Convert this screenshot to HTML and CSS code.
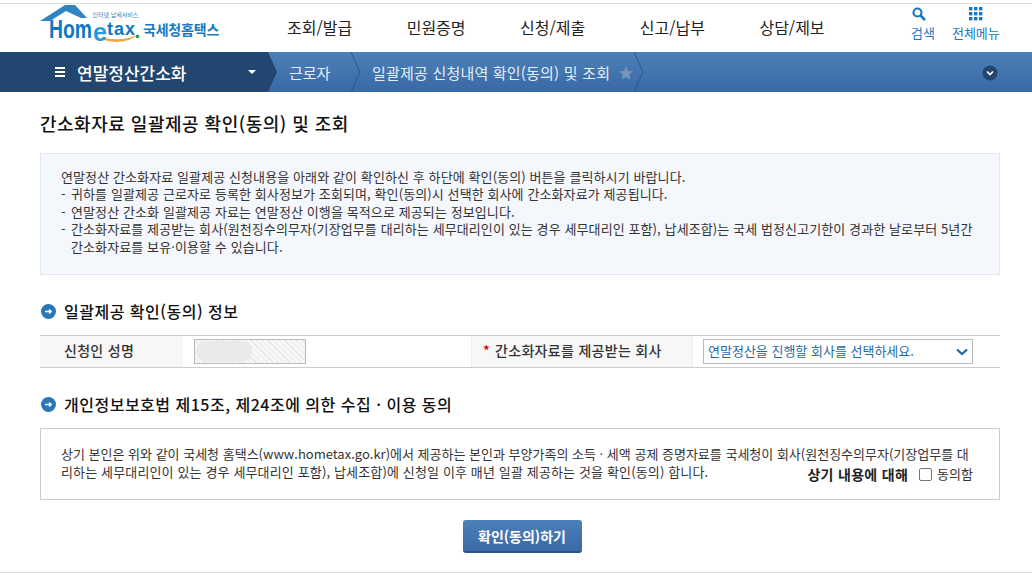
FILE: index.html
```html
<!DOCTYPE html>
<html lang="ko">
<head>
	<meta charset="utf-8"/>
	<title>연말정산간소화</title>
	<link rel="stylesheet" href="styles.css">
</head>
<body>
	<div class="header">
		<div class="logo">
			<svg width="180" height="46" viewBox="0 0 180 46">
				<path d="M0 21 L25 5 L35 5 L47 18 L41 18 L26 11 L10 21 Z" fill="#2f84c4"/>
				<path d="M64 40 Q84 46 99 34 Q84 42 64 38 Z" fill="#f0a93c"/>
				<circle cx="97.5" cy="36.5" r="1.8" fill="#1f9a47"/>
				<text x="9" y="38" textLength="43" lengthAdjust="spacingAndGlyphs" class="logo-home">Hom</text>
				<text x="53" y="41" class="logo-e">e</text>
				<text x="67" y="35" textLength="28" class="logo-tax">tax</text>
				<text x="52.5" y="17" class="logo-small">인터넷 납세서비스</text>
				<text x="103" y="35" class="logo-name">국세청홈택스</text>
			</svg>
		</div>
		<ul class="gnb">
			<li>조회/발급</li>
			<li>민원증명</li>
			<li>신청/제출</li>
			<li>신고/납부</li>
			<li>상담/제보</li>
		</ul>
		<div class="util">
			<div class="util-item">
				<svg class="search-icon" width="14" height="14" viewBox="0 0 14 14">
					<circle cx="5.5" cy="5.5" r="4" fill="none" stroke="#1a78bf" stroke-width="2.2"/>
					<path d="M8.5 8.5 L13 13" stroke="#1a78bf" stroke-width="2.6"/>
				</svg>
				<span>검색</span>
			</div>
			<div class="util-item">
				<svg width="14" height="14" viewBox="0 0 14 14" fill="#1a78bf">
					<rect x="0" y="0" width="3.4" height="3.4"/><rect x="5" y="0" width="3.4" height="3.4"/><rect x="10" y="0" width="3.4" height="3.4"/>
					<rect x="0" y="5" width="3.4" height="3.4"/><rect x="5" y="5" width="3.4" height="3.4"/><rect x="10" y="5" width="3.4" height="3.4"/>
					<rect x="0" y="10" width="3.4" height="3.4"/><rect x="5" y="10" width="3.4" height="3.4"/><rect x="10" y="10" width="3.4" height="3.4"/>
				</svg>
				<span>전체메뉴</span>
			</div>
		</div>
	</div>

	<div class="crumb">
		<div class="crumb-first">
			<span class="burger"></span>
			<span class="crumb-title">연말정산간소화</span>
			<span class="caret"></span>
		</div>
		<svg class="chev first" width="10" height="40" viewBox="0 0 10 40"><path d="M0 0 L9 20 L0 40 Z" fill="#22466f"/></svg>
		<div class="crumb-item one">근로자</div>
		<svg class="chev" width="10" height="40" viewBox="0 0 10 40"><path d="M0 0 L9 20 L0 40" fill="none" stroke="#245a8e"/></svg>
		<div class="crumb-item two">일괄제공 신청내역 확인(동의) 및 조회
			<svg class="star" width="14" height="14" viewBox="0 0 14 14"><path d="M7 0 L9 5 L14 5.3 L10.2 8.6 L11.4 13.6 L7 11 L2.6 13.6 L3.8 8.6 L0 5.3 L5 5 Z" fill="#7596bd"/></svg>
		</div>
		<svg class="chev" width="10" height="40" viewBox="0 0 10 40"><path d="M0 0 L9 20 L0 40" fill="none" stroke="#245a8e"/></svg>
		<svg class="more" width="16" height="16" viewBox="0 0 16 16">
			<circle cx="8" cy="8" r="7.5" fill="#22466f"/>
			<path d="M5 6.5 L8 9.5 L11 6.5" fill="none" stroke="#fff" stroke-width="1.6"/>
		</svg>
	</div>

	<div class="content">
		<h1 class="page-title">간소화자료 일괄제공 확인(동의) 및 조회</h1>

		<div class="notice">
			<p class="lead">연말정산 간소화자료 일괄제공 신청내용을 아래와 같이 확인하신 후 하단에 확인(동의) 버튼을 클릭하시기 바랍니다.</p>
			<p class="dash">귀하를 일괄제공 근로자로 등록한 회사정보가 조회되며, 확인(동의)시 선택한 회사에 간소화자료가 제공됩니다.</p>
			<p class="dash">연말정산 간소화 일괄제공 자료는 연말정산 이행을 목적으로 제공되는 정보입니다.</p>
			<p class="dash">간소화자료를 제공받는 회사(원천징수의무자(기장업무를 대리하는 세무대리인이 있는 경우 세무대리인 포함), 납세조합)는 국세 법정신고기한이 경과한 날로부터 5년간 간소화자료를 보유·이용할 수 있습니다.</p>
		</div>

		<h2 class="sub-title">
			<svg class="bullet" width="15" height="15" viewBox="0 0 15 15">
				<circle cx="7.5" cy="7.5" r="7.5" fill="#2a76b6"/>
				<path d="M4 7.5 L10 7.5 M8 5.5 L10.2 7.5 L8 9.5" fill="none" stroke="#fff" stroke-width="1.4"/>
			</svg>
			일괄제공 확인(동의) 정보
		</h2>
		<div class="info-row">
			<div class="th name-th">신청인 성명</div>
			<div class="td name-td"><div class="name-box"><span class="blur"></span></div></div>
			<div class="th company-th"><em>*</em>간소화자료를 제공받는 회사</div>
			<div class="td company-td">
				<div class="select">연말정산을 진행할 회사를 선택하세요.
					<svg width="12" height="8" viewBox="0 0 12 8"><path d="M1 1.5 L6 6 L11 1.5" fill="none" stroke="#1f6aa5" stroke-width="2.2"/></svg>
				</div>
			</div>
		</div>

		<h2 class="sub-title second">
			<svg class="bullet" width="15" height="15" viewBox="0 0 15 15">
				<circle cx="7.5" cy="7.5" r="7.5" fill="#2a76b6"/>
				<path d="M4 7.5 L10 7.5 M8 5.5 L10.2 7.5 L8 9.5" fill="none" stroke="#fff" stroke-width="1.4"/>
			</svg>
			개인정보보호법 제15조, 제24조에 의한 수집 · 이용 동의
		</h2>
		<div class="agree">
			<p>상기 본인은 위와 같이 국세청 홈택스(www.hometax.go.kr)에서 제공하는 본인과 부양가족의 소득 · 세액 공제 증명자료를 국세청이 회사(원천징수의무자(기장업무를 대<br><span class="line2">리하는 세무대리인이 있는 경우 세무대리인 포함), 납세조합)에 신청일 이후 매년 일괄 제공하는 것을 확인(동의) 합니다.</span></p>
			<div class="agree-check"><b>상기 내용에 대해</b><span class="checkbox"></span><span>동의함</span></div>
		</div>

		<div class="btn-wrap"><button class="btn">확인(동의)하기</button></div>
	</div>
	<div class="foot-line"></div>
</body>
</html>
```

FILE: styles.css
```css
*{margin: 0;padding: 0;box-sizing: border-box;}
ul{list-style-type: none;}
body{
	font-family: "Noto Sans CJK KR", "Liberation Sans", sans-serif;
	background: #fff;
	color: #222;
	font-size: 13px;
}
.header{
	height: 49px;
	border-top: 1px solid #ddd;
	margin-top: 3px;
	padding-left: 40px;
	display: flex;
	position: relative;
}
.logo{
	width: 180px;
	margin-top: -4px;
}
.logo svg{display: block;}
.logo-home{font: bold 26px "Liberation Sans", sans-serif;fill: #0f78c0;}
.logo-e{font: bold 25px "Liberation Sans", sans-serif;fill: #2f9ad6;}
.logo-tax{font: bold 18px "Liberation Sans", sans-serif;fill: #0f78c0;}
.logo-small{font-size: 6px;fill: #3b7fb8;}
.logo-name{font-size: 14px;font-weight: 700;fill: #1a78bf;letter-spacing: -.2px;}
.gnb{
	display: flex;
	gap: 54.5px;
	margin-left: 67px;
	padding-top: 13px;
}
.gnb li{
	font-size: 16px;
	line-height: 20px;
	color: #222;
	white-space: nowrap;
}
.util{
	position: absolute;
	top: 3px;
	left: 911px;
	display: flex;
	gap: 17px;
}
.util-item{
	display: flex;
	flex-direction: column;
	align-items: center;
	gap: 3px;
	font-size: 13px;
	line-height: 18px;
	color: #1a78bf;
}
.search-icon{margin-right: 8px;}
.crumb{
	height: 40px;
	background: linear-gradient(#4c80b9, #3a69a5);
	display: flex;
	align-items: center;
	position: relative;
	color: #e6eef7;
	font-size: 15px;
}
.crumb-first{
	width: 268px;
	height: 40px;
	padding-left: 40px;
	background: #22466f;
	display: flex;
	align-items: center;
	color: #fff;
}
.burger{
	width: 10px;
	height: 10px;
	margin-left: 15px;
	border-top: 2px solid #fff;
	border-bottom: 2px solid #fff;
	position: relative;
}
.burger:after{
	content: "";
	position: absolute;
	left: 0;
	right: 0;
	top: 2px;
	height: 2px;
	background: #fff;
}
.crumb-title{
	margin-left: 12px;
	font-size: 17px;
	font-weight: 500;
	width: 171px;
	white-space: nowrap;
}
.caret{
	width: 0;
	height: 0;
	border: 4px solid transparent;
	border-top: 4px solid #fff;
	border-bottom: 0;
}
.chev{flex: none;}
.crumb-item{padding-left: 11px;white-space: nowrap;}
.crumb-item.one{width: 73px;}
.crumb-item.two{width: 273px;position: relative;letter-spacing: .2px;}
.star{position: absolute;left: 258px;top: 4px;}
.more{position: absolute;left: 982px;top: 13px;}
.content{
	padding: 0 32px 0 40px;
}
.page-title{
	font-size: 18px;
	font-weight: 500;
	letter-spacing: .5px;
	line-height: 24px;
	margin-top: 19px;
	color: #111;
}
.notice{
	margin-top: 18px;
	height: 122px;
	background: #f4f7fc;
	border: 1px solid #e3e8f0;
	padding: 15px 20px;
	line-height: 17.5px;
	letter-spacing: .1px;
	color: #333;
}
.notice .lead{line-height: 16px;}
.notice .dash{
	padding-left: 10px;
	position: relative;
}
.notice .dash:before{
	content: "-";
	position: absolute;
	left: 0;
}
.sub-title{
	font-size: 16px;
	font-weight: 500;
	letter-spacing: .5px;
	line-height: 20px;
	margin-top: 26px;
	color: #111;
	display: flex;
	align-items: center;
}
.bullet{
	margin-right: 8px;
	margin-left: 1px;
	flex: none;
}
.info-row{
	margin-top: 14px;
	display: flex;
	height: 33px;
	border-top: 1px solid #ccc;
	border-bottom: 1px solid #ccc;
}
.th{
	background: #f7f7f7;
	font-size: 14px;
	letter-spacing: .3px;
	font-weight: 500;
	line-height: 29px;
	color: #333;
}
.name-th{width: 143px;padding-left: 24px;}
.name-td{width: 288px;padding: 3px 11px;}
.name-box{
	width: 112px;
	height: 25px;
	border: 1px solid #bbb;
	background: repeating-linear-gradient(45deg, #f7f7f7 0 3px, #e6e6e6 3px 4px);
	padding: 1px;
}
.blur{
	display: block;
	width: 56px;
	height: 21px;
	border-radius: 10px;
	background: #eaeaea;
}
.company-th{
	width: 222px;
	padding-left: 11px;
	border-left: 1px solid #eee;
	border-right: 1px solid #eee;
}
.company-th em{color: #c00;font-style: normal;margin-right: 5px;}
.company-td{padding: 3px 10px;flex: 1;}
.select{
	width: 270px;
	height: 25px;
	border: 1px solid #bbb;
	padding: 0 0 2px 4px;
	color: #1f6aa5;
	line-height: 21px;
	display: flex;
	justify-content: space-between;
	align-items: center;
}
.select svg{margin: 2px 4px 0 0;}
.agree{
	margin-top: 14px;
	height: 72px;
	border: 1px solid #ccc;
	padding: 16px 20px;
	line-height: 18px;
	color: #333;
	position: relative;
}
.agree .line2{letter-spacing: .14px;}
.agree-check{
	position: absolute;
	right: 26px;
	bottom: 16px;
	display: flex;
	align-items: center;
}
.agree-check b{font-size: 14px;font-weight: 700;letter-spacing: .3px;color: #222;}
.checkbox{
	width: 13px;
	height: 13px;
	border: 1px solid #767676;
	border-radius: 2px;
	margin: 0 5px 0 11px;
}
.btn-wrap{
	margin-top: 20px;
	padding-left: 4px;
	display: flex;
	justify-content: center;
}
.btn{
	width: 119px;
	height: 33px;
	border: 0;
	border-bottom: 2px solid #2c5688;
	border-radius: 3px;
	background: linear-gradient(#4c80b9, #3a69a5);
	color: #fff;
	font: 700 14px "Noto Sans CJK KR", sans-serif;
}
.foot-line{
	margin-top: 19px;
	border-top: 1px solid #ddd;
}
```
